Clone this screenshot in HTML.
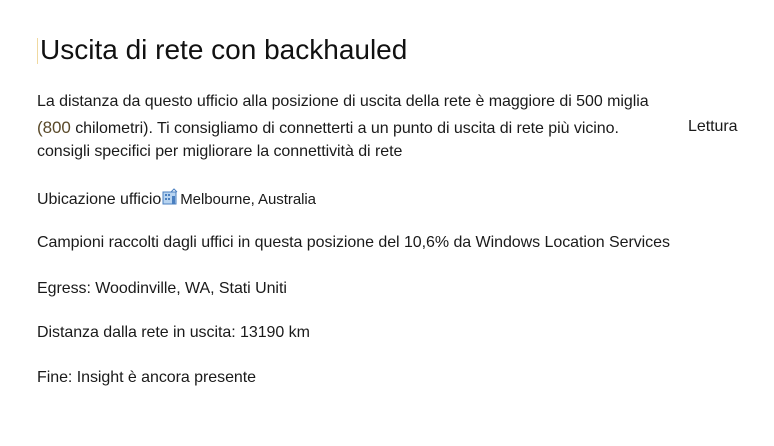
<!DOCTYPE html>
<html><head><meta charset="utf-8"><style>
body{margin:0;width:774px;height:446px;background:#fff;font-family:"Liberation Sans",Arial,sans-serif;color:#1a1a1a;position:relative;overflow:hidden}
.t{position:absolute;white-space:nowrap;font-size:16px;letter-spacing:-0.05px}
h1{position:absolute;left:40px;top:34px;margin:0;font-weight:normal;font-size:28px;letter-spacing:0;color:#111}
.cur{position:absolute;left:37px;top:38px;width:1px;height:26px;background:#f0d9a0}
</style></head><body>
<div class="cur"></div>
<h1>Uscita di rete con backhauled</h1>
<div class="t" style="left:37px;top:93px">La distanza da questo ufficio alla posizione di uscita della rete è maggiore di 500 miglia</div>
<div class="t" style="left:37px;top:118px"><span style="color:#5a4a2a;font-size:17px">(800</span> chilometri). Ti consigliamo di connetterti a un punto di uscita di rete più vicino.</div>
<div class="t" style="left:688px;top:118px">Lettura</div>
<div class="t" style="left:37px;top:143px">consigli specifici per migliorare la connettività di rete</div>
<div class="t" style="left:37px;top:188px">Ubicazione ufficio<svg width="16" height="17" viewBox="0 0 16 17" style="vertical-align:-1px;margin:0 2px 0 1px"><rect x="1" y="4" width="13" height="12" fill="#b8d4f0" stroke="#4a7fc0"/><path d="M9 4 L12 1 L15 4" fill="none" stroke="#4a7fc0"/><rect x="3" y="6" width="2" height="2" fill="#4a7fc0"/><rect x="6" y="6" width="2" height="2" fill="#4a7fc0"/><rect x="3" y="10" width="2" height="2" fill="#4a7fc0"/><rect x="6" y="10" width="2" height="2" fill="#4a7fc0"/><rect x="10" y="8" width="3" height="8" fill="#4a7fc0"/></svg><span style="font-size:15px">Melbourne, Australia</span></div>
<div class="t" style="left:37px;top:234px">Campioni raccolti dagli uffici in questa posizione del 10,6% da Windows Location Services</div>
<div class="t" style="left:37px;top:280px">Egress: Woodinville, WA, Stati Uniti</div>
<div class="t" style="left:37px;top:324px">Distanza dalla rete in uscita: 13190 km</div>
<div class="t" style="left:37px;top:369px">Fine: Insight è ancora presente</div>
</body></html>
